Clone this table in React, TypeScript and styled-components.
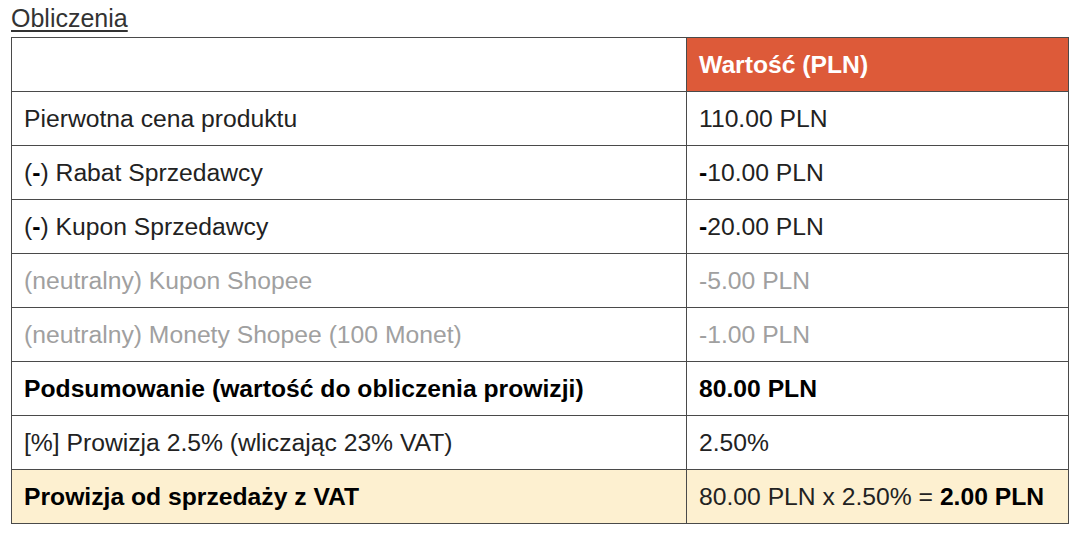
import styled, { createGlobalStyle } from 'styled-components';

const GlobalStyle = createGlobalStyle`
  html, body {
    margin: 0;
    padding: 0;
    background: #ffffff;
  }
  body {
    font-family: 'Liberation Sans', Arial, sans-serif;
  }
`;

type Tone = 'normal' | 'muted' | 'strong';

interface Row {
  label: React.ReactNode;
  value: React.ReactNode;
  tone: Tone;
}

const Minus = () => <b>-</b>;

const rows: Row[] = [
  { label: 'Pierwotna cena produktu', value: '110.00 PLN', tone: 'normal' },
  {
    label: (
      <>
        (<Minus />) Rabat Sprzedawcy
      </>
    ),
    value: (
      <>
        <Minus />
        10.00 PLN
      </>
    ),
    tone: 'normal',
  },
  {
    label: (
      <>
        (<Minus />) Kupon Sprzedawcy
      </>
    ),
    value: (
      <>
        <Minus />
        20.00 PLN
      </>
    ),
    tone: 'normal',
  },
  { label: '(neutralny) Kupon Shopee', value: '-5.00 PLN', tone: 'muted' },
  { label: '(neutralny) Monety Shopee (100 Monet)', value: '-1.00 PLN', tone: 'muted' },
  { label: 'Podsumowanie (wartość do obliczenia prowizji)', value: '80.00 PLN', tone: 'strong' },
  { label: '[%] Prowizja 2.5% (wliczając 23% VAT)', value: '2.50%', tone: 'normal' },
];

function App() {
  return (
    <Styled.Page>
      <GlobalStyle />
      <Styled.Title>Obliczenia</Styled.Title>
      <Styled.Table>
        <colgroup>
          <col style={{ width: 675 }} />
          <col />
        </colgroup>
        <thead>
          <tr>
            <Styled.Cell as="th" />
            <Styled.HeadCell>Wartość (PLN)</Styled.HeadCell>
          </tr>
        </thead>
        <tbody>
          {rows.map((row, i) => (
            <tr key={i}>
              <Styled.Cell tone={row.tone}>{row.label}</Styled.Cell>
              <Styled.Cell tone={row.tone}>{row.value}</Styled.Cell>
            </tr>
          ))}
          <Styled.TotalRow>
            <Styled.Cell tone="strong">Prowizja od sprzedaży z VAT</Styled.Cell>
            <Styled.Cell>
              80.00 PLN x 2.50% = <b>2.00 PLN</b>
            </Styled.Cell>
          </Styled.TotalRow>
        </tbody>
      </Styled.Table>
    </Styled.Page>
  );
}

export default App;

const toneColor: Record<Tone, string> = {
  normal: '#222222',
  muted: '#a0a0a0',
  strong: '#000000',
};

const Styled = {
  Page: styled.div`
    width: 1080px;
    height: 535px;
    padding: 4px 12px 0 11px;
    box-sizing: border-box;
  `,
  Title: styled.h2`
    margin: 0 0 5px;
    font-size: 25px;
    font-weight: 400;
    line-height: 28px;
    color: #333333;
    text-decoration: underline;
    text-underline-offset: 3px;
    text-decoration-thickness: 2px;
  `,
  Table: styled.table`
    width: 1058px;
    border-collapse: collapse;
    table-layout: fixed;
  `,
  Cell: styled.td<{ tone?: Tone }>`
    height: 53px;
    padding: 0 12px;
    border: 1px solid #4a4a4a;
    font-size: 24.7px;
    text-align: left;
    vertical-align: middle;
    color: ${({ tone }) => toneColor[tone ?? 'normal']};
    font-weight: ${({ tone }) => (tone === 'strong' ? 700 : 400)};
    white-space: nowrap;
    & b {
      font-weight: 700;
      color: #000000;
    }
  `,
  HeadCell: styled.th`
    height: 53px;
    padding: 0 12px;
    border: 1px solid #4a4a4a;
    background: #dd5a39;
    color: #ffffff;
    font-size: 24.7px;
    font-weight: 700;
    text-align: left;
  `,
  TotalRow: styled.tr`
    background: #fdf0d0;
  `,
};
